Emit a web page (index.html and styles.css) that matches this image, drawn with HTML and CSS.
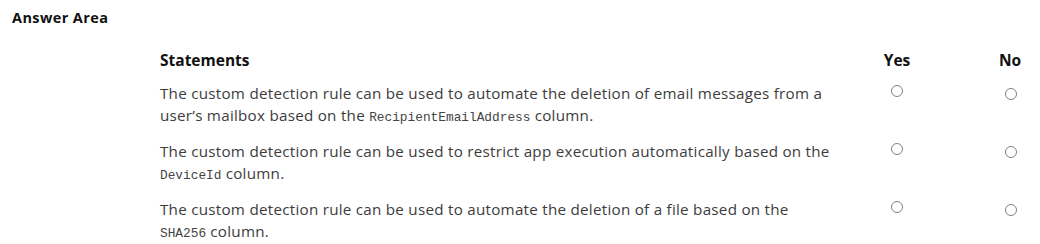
FILE: index.html
```html
<!DOCTYPE html>
<html lang="en">
<head>
    <meta charset="UTF-8">
    <title>Answer Area</title>
    <link rel="stylesheet" href="styles.css">
</head>
<body>
    <h3 class="area-title">Answer Area</h3>
    <div class="answer-grid">
        <div class="head">Statements</div>
        <div class="head center">Yes</div>
        <div class="head center no">No</div>

        <div class="statement">The custom detection rule can be used to automate the deletion of email messages from a user’s mailbox based on the <code>RecipientEmailAddress</code> column.</div>
        <div class="choice"><span class="radio"></span></div>
        <div class="choice no"><span class="radio"></span></div>

        <div class="statement">The custom detection rule can be used to restrict app execution automatically based on the <code>DeviceId</code> column.</div>
        <div class="choice"><span class="radio"></span></div>
        <div class="choice no"><span class="radio"></span></div>

        <div class="statement">The custom detection rule can be used to automate the deletion of a file based on the <code>SHA256</code> column.</div>
        <div class="choice"><span class="radio"></span></div>
        <div class="choice no"><span class="radio"></span></div>
    </div>
</body>
</html>
```

FILE: styles.css
```css
body {
    margin: 0;
    padding: 0;
    font-family: "Open Sans", "Noto Sans", sans-serif;
    color: #3c3c3c;
    background: #fff;
}

.area-title {
    margin: 0;
    padding: 8px 0 0 12px;
    font-size: 14.5px;
    line-height: 20px;
    letter-spacing: 0.4px;
    font-weight: bold;
    color: #111;
}

/* statement column, then Yes and No */
.answer-grid {
    display: grid;
    grid-template-columns: 712px 50px 114px;
    row-gap: 14px;
    margin: 21px 0 0 160px;
}

.head {
    font-size: 15.5px;
    line-height: 22px;
    font-weight: bold;
    color: #111;
    margin-bottom: -3px;
}

.center {
    text-align: center;
}

.no {
    padding-left: 64px;
}

.head.no {
    text-align: left;
    padding-left: 77px;
}

.statement {
    width: 674px;
    font-size: 15.2px;
    line-height: 22px;
    letter-spacing: 0.26px;
}

code {
    font-family: "Liberation Mono", monospace;
    font-size: 12.8px;
    line-height: 14px;
    letter-spacing: 0;
    color: #444;
}

.choice {
    display: flex;
    justify-content: center;
    align-items: flex-start;
    padding-top: 3px;
}

.choice.no {
    padding-top: 6px;
}

.radio {
    box-sizing: border-box;
    width: 12px;
    height: 12px;
    border: 1.5px solid #808080;
    border-radius: 50%;
}
```
